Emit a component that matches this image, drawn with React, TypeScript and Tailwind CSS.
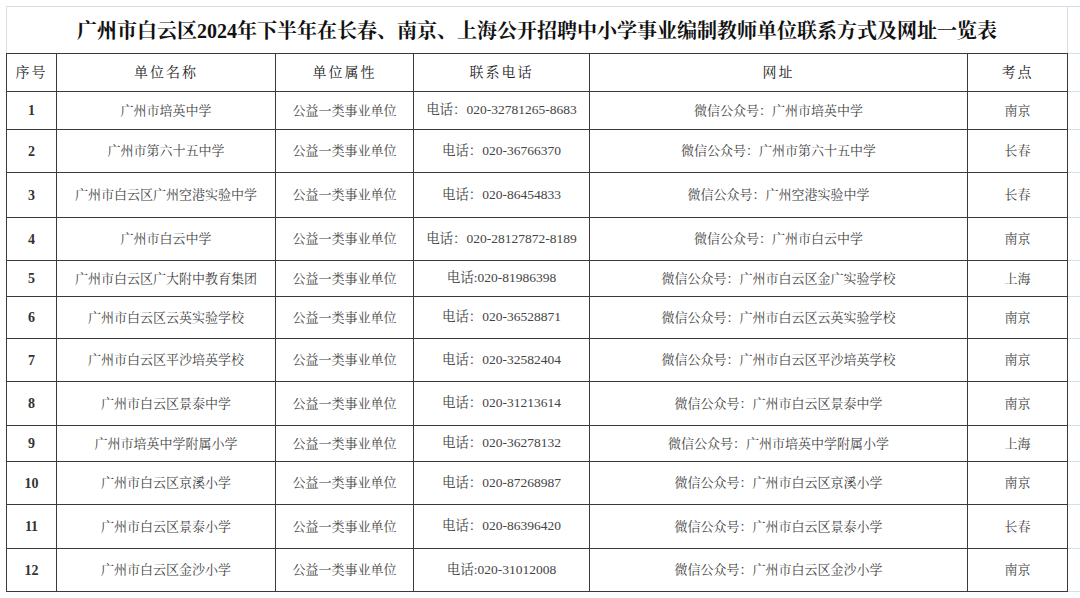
import React from 'react';

type Row = {
  no: number;
  name: string;
  kind: string;
  phone: string;
  site: string;
  place: string;
  h: string;
};

// row heights follow the sheet (some rows are shorter)
const rows: Row[] = [
  { no: 1, name: '广州市培英中学', kind: '公益一类事业单位', phone: '电话：020-32781265-8683', site: '微信公众号：广州市培英中学', place: '南京', h: 'h-[38px]' },
  { no: 2, name: '广州市第六十五中学', kind: '公益一类事业单位', phone: '电话：020-36766370', site: '微信公众号：广州市第六十五中学', place: '长春', h: 'h-[43px]' },
  { no: 3, name: '广州市白云区广州空港实验中学', kind: '公益一类事业单位', phone: '电话：020-86454833', site: '微信公众号：广州空港实验中学', place: '长春', h: 'h-[45px]' },
  { no: 4, name: '广州市白云中学', kind: '公益一类事业单位', phone: '电话：020-28127872-8189', site: '微信公众号：广州市白云中学', place: '南京', h: 'h-[43px]' },
  { no: 5, name: '广州市白云区广大附中教育集团', kind: '公益一类事业单位', phone: '电话:020-81986398', site: '微信公众号：广州市白云区金广实验学校', place: '上海', h: 'h-[36px]' },
  { no: 6, name: '广州市白云区云英实验学校', kind: '公益一类事业单位', phone: '电话：020-36528871', site: '微信公众号：广州市白云区云英实验学校', place: '南京', h: 'h-[42px]' },
  { no: 7, name: '广州市白云区平沙培英学校', kind: '公益一类事业单位', phone: '电话：020-32582404', site: '微信公众号：广州市白云区平沙培英学校', place: '南京', h: 'h-[43px]' },
  { no: 8, name: '广州市白云区景泰中学', kind: '公益一类事业单位', phone: '电话：020-31213614', site: '微信公众号：广州市白云区景泰中学', place: '南京', h: 'h-[44px]' },
  { no: 9, name: '广州市培英中学附属小学', kind: '公益一类事业单位', phone: '电话：020-36278132', site: '微信公众号：广州市培英中学附属小学', place: '上海', h: 'h-[36px]' },
  { no: 10, name: '广州市白云区京溪小学', kind: '公益一类事业单位', phone: '电话：020-87268987', site: '微信公众号：广州市白云区京溪小学', place: '南京', h: 'h-[43px]' },
  { no: 11, name: '广州市白云区景泰小学', kind: '公益一类事业单位', phone: '电话：020-86396420', site: '微信公众号：广州市白云区景泰小学', place: '长春', h: 'h-[44px]' },
  { no: 12, name: '广州市白云区金沙小学', kind: '公益一类事业单位', phone: '电话:020-31012008', site: '微信公众号：广州市白云区金沙小学', place: '南京', h: 'h-[43px]' },
];

const headers = ['序号', '单位名称', '单位属性', '联系电话', '网址', '考点'];

const cell = 'border border-[#3a3a3a] text-center align-middle p-0';

export default function App() {
  return (
    <div
      className="w-[1080px] h-[598px] bg-white overflow-hidden pt-[6px] pl-[6px]"
      style={{ fontFamily: '"Liberation Serif", "Noto Serif CJK SC", "Noto Sans CJK SC", serif' }}
    >
      <table className="table-fixed border-collapse w-[1074px]">
        <colgroup>
          <col className="w-[50px]" />
          <col className="w-[219px]" />
          <col className="w-[138px]" />
          <col className="w-[176px]" />
          <col className="w-[378px]" />
          <col className="w-[100px]" />
          <col className="w-[13px]" />
        </colgroup>
        <tbody>
          {/* title row sits on plain sheet gridlines */}
          <tr className="h-[47px]">
            <td
              colSpan={6}
              className="border border-[#d9dde8] border-b-[#3a3a3a] text-center align-middle p-0 pt-[2px] text-[20px] font-bold text-[#111]"
            >
              广州市白云区2024年下半年在长春、南京、上海公开招聘中小学事业编制教师单位联系方式及网址一览表
            </td>
            <td className="border-t border-b border-[#d9dde8] p-0" />
          </tr>

          <tr className="h-[38px]">
            {headers.map((t) => (
              <td key={t} className={`${cell} text-[14px] tracking-[2px] text-[#222]`}>
                {t}
              </td>
            ))}
            <td className="border-t border-b border-[#d9dde8] p-0" />
          </tr>

          {rows.map((r) => (
            <tr key={r.no} className={r.h}>
              <td className={`${cell} text-[14px] font-semibold text-[#333]`}>{r.no}</td>
              <td className={`${cell} text-[13px] text-[#444]`}>{r.name}</td>
              <td className={`${cell} text-[13px] text-[#444]`}>{r.kind}</td>
              <td className={`${cell} text-[13.5px] text-[#444]`}>{r.phone}</td>
              <td className={`${cell} text-[13px] text-[#444]`}>{r.site}</td>
              <td className={`${cell} text-[13px] text-[#444]`}>{r.place}</td>
              <td className="border-t border-b border-[#d9dde8] p-0" />
            </tr>
          ))}
        </tbody>
      </table>
    </div>
  );
}
